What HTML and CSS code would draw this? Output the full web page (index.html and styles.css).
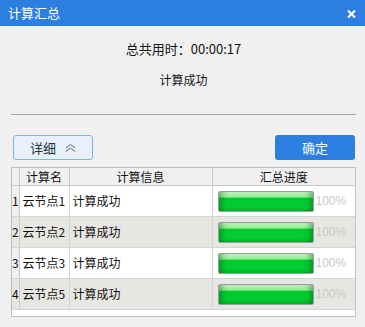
FILE: index.html
```html
<!DOCTYPE html>
<html lang="zh-CN">
<head>
    <meta charset="UTF-8">
    <title>计算汇总</title>
    <link rel="stylesheet" href="styles.css">
</head>
<body>
    <div class="titlebar">
        <span class="title">计算汇总</span>
        <svg class="close" width="9" height="8" viewBox="0 0 9 8">
            <path d="M1 0.5 L8 7.5 M8 0.5 L1 7.5" stroke="#fff" stroke-width="2"/>
        </svg>
    </div>
    <div class="content">
        <div class="time">总共用时：00:00:17</div>
        <div class="status">计算成功</div>
        <div class="divider"></div>
        <div class="actions">
            <button class="btn-detail">详细
                <svg width="11" height="8" viewBox="0 0 11 8">
                    <path d="M1 4 L5.5 0.5 L10 4 M1 7.5 L5.5 4 L10 7.5" fill="none" stroke="#5a6678" stroke-width="1"/>
                </svg>
            </button>
            <button class="btn-ok">确定</button>
        </div>
        <div class="grid">
            <table>
                <colgroup>
                    <col class="c-idx">
                    <col class="c-name">
                    <col class="c-info">
                    <col>
                </colgroup>
                <thead>
                    <tr>
                        <th></th>
                        <th>计算名</th>
                        <th>计算信息</th>
                        <th>汇总进度</th>
                    </tr>
                </thead>
                <tbody>
                    <tr>
                        <td class="idx">1</td>
                        <td>云节点1</td>
                        <td>计算成功</td>
                        <td><div class="prog"><div class="bar"></div><span>100%</span></div></td>
                    </tr>
                    <tr class="alt">
                        <td class="idx">2</td>
                        <td>云节点2</td>
                        <td>计算成功</td>
                        <td><div class="prog"><div class="bar"></div><span>100%</span></div></td>
                    </tr>
                    <tr>
                        <td class="idx">3</td>
                        <td>云节点3</td>
                        <td>计算成功</td>
                        <td><div class="prog"><div class="bar"></div><span>100%</span></div></td>
                    </tr>
                    <tr class="alt">
                        <td class="idx">4</td>
                        <td>云节点5</td>
                        <td>计算成功</td>
                        <td><div class="prog"><div class="bar"></div><span>100%</span></div></td>
                    </tr>
                </tbody>
            </table>
        </div>
    </div>
</body>
</html>
```

FILE: styles.css
```css
body {
    margin: 0;
    background: #f0f0f0;
    font-family: "Noto Sans CJK SC", "Liberation Sans", sans-serif;
    font-size: 12px;
    color: #111;
}
.titlebar {
    height: 26px;
    background: #2c7fe0;
    display: flex;
    align-items: center;
    justify-content: space-between;
    padding: 0 9px 0 8px;
}
.title {
    color: #fff;
    font-size: 13px;
    line-height: 16px;
}
.close {
    display: block;
    margin-top: 1px;
}
.content {
    padding: 0 9px 0 11px;
}
.time {
    margin-top: 15px;
    text-align: center;
    line-height: 16px;
    font-size: 13px;
}
.status {
    margin-top: 15px;
    text-align: center;
    line-height: 16px;
    font-size: 12px;
}
.divider {
    margin-top: 26px;
    height: 1px;
    background: #a6a6a6;
}
.actions {
    margin-top: 20px;
    display: flex;
    justify-content: space-between;
    padding: 0 1px 0 2px;
}
.actions button {
    width: 80px;
    height: 25px;
    border-radius: 3px;
    font-family: inherit;
    font-size: 13px;
    cursor: pointer;
    padding: 0;
}
.btn-detail {
    background: #e6f1fc;
    border: 1px solid #7eb3ea;
    color: #26344a;
    display: flex;
    align-items: center;
    justify-content: center;
    gap: 9px;
}
.btn-ok {
    background: #2c7fe0;
    border: none;
    color: #fff;
}
.grid {
    margin-top: 7px;
    height: 148px;
    border: 1px solid #bdbdbd;
    border-right-color: #c4c4c4;
    background: #fff;
}
table {
    width: 100%;
    border-collapse: collapse;
    table-layout: fixed;
}
.c-idx { width: 7px; }
.c-name { width: 50px; }
.c-info { width: 143px; }
th {
    height: 17px;
    padding: 0;
    font-weight: normal;
    font-size: 12px;
    line-height: 16px;
    background: #f0f0f0;
    border-right: 1px solid #c8c8c8;
    border-bottom: 1px solid #c8c8c8;
}
th:last-child, td:last-child {
    border-right: none;
}
td {
    height: 30px;
    padding: 0 0 0 3px;
    font-size: 12px;
    line-height: 16px;
    white-space: nowrap;
    border-right: 1px solid #d4d4d4;
    border-bottom: 1px solid #d4d4d4;
}
td.idx {
    padding: 0;
    text-align: center;
    background: #f0f0f0;
    border-right-color: #c8c8c8;
}
tr.alt td {
    background: #e8e6e2;
}
.prog {
    display: flex;
    align-items: center;
    padding-left: 2px;
}
.bar {
    width: 94px;
    height: 19px;
    border: 1px solid #9c9c9c;
    border-radius: 2px;
    background: linear-gradient(#d0f8d0 0, #8eed8e 25%, #5ee06a 30%, #00c82e 34%, #00d034 75%, #00b82a 100%);
    box-shadow: inset 7px 0 6px -4px rgba(0, 90, 20, 0.45), inset -7px 0 6px -4px rgba(0, 90, 20, 0.45);
}
.prog span {
    margin-left: 2px;
    font-family: "Liberation Sans", sans-serif;
    color: #c8c8c8;
    font-size: 12px;
}
```
